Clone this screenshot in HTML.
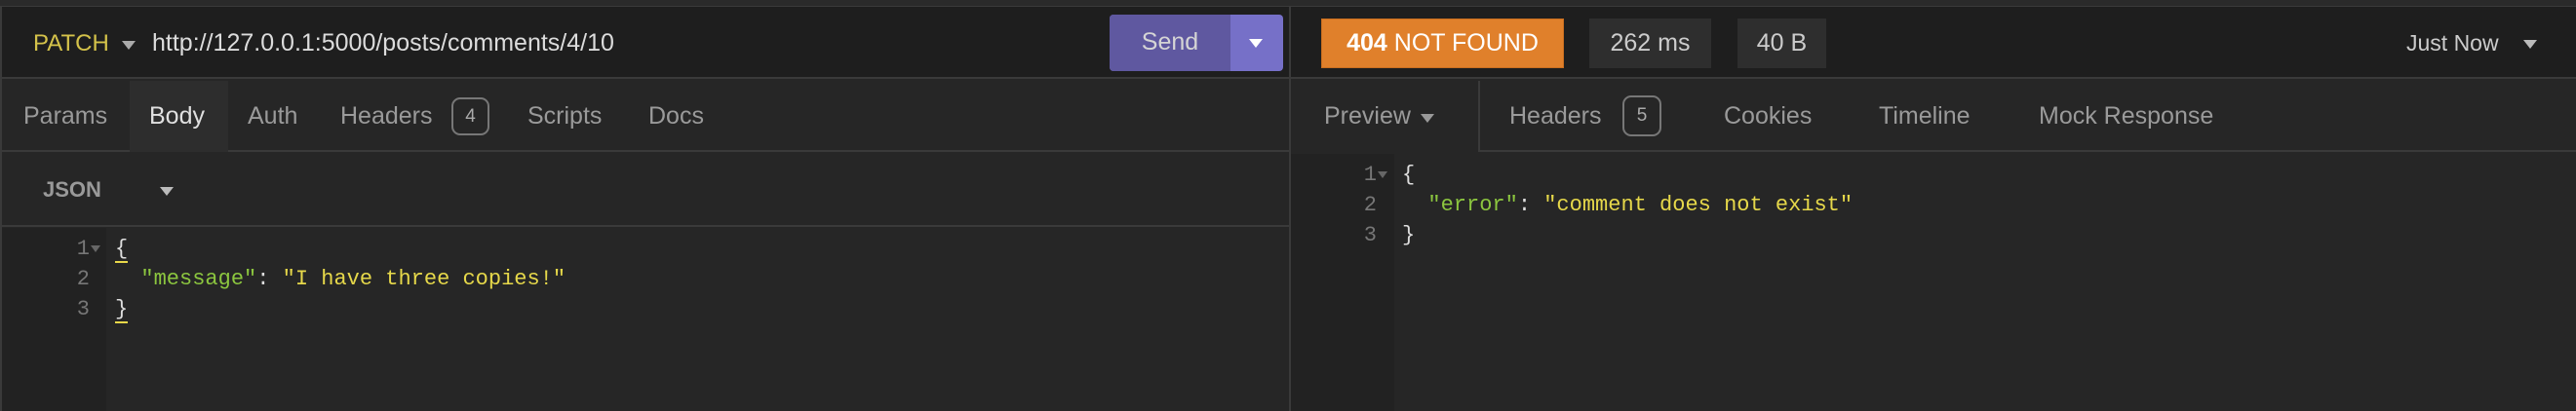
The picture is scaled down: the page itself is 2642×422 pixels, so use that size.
<!DOCTYPE html>
<html><head><style>
*{margin:0;padding:0;box-sizing:border-box}
body{width:2642px;height:422px;background:#262626;position:relative;overflow:hidden;font-family:"Liberation Sans",sans-serif;color:#a8a8a8}
.a{position:absolute;white-space:nowrap}
.mono{font-family:"Liberation Mono",monospace;font-size:22px}
.tab{font-size:25px;color:#9a9a9a;top:105px}
.badge{position:absolute;border:2px solid #777;border-radius:9px;font-size:19px;color:#aaa;text-align:center;line-height:35px}
.tri{width:0;height:0;border-left:7px solid transparent;border-right:7px solid transparent;border-top:9px solid currentColor;position:absolute}
</style></head><body>
<div class="a" style="left:0;top:0;width:2642px;height:7px;background:#2a2a2a;border-bottom:1px solid #3a3a3a"></div>
<div class="a" style="left:0;top:7px;width:2642px;height:74px;background:#1e1e1e;border-bottom:2px solid #3a3a3a"></div>
<div class="a" style="left:0;top:7px;width:2px;height:415px;background:#3a3a3a"></div>
<div class="a" style="left:1322px;top:7px;width:2px;height:415px;background:#3a3a3a"></div>
<div class="a" style="left:34px;top:31px;font-size:24px;color:#d4c24a">PATCH</div>
<div class="tri" style="left:125px;top:42px;color:#aaa"></div>
<div class="a" style="left:156px;top:30px;font-size:25px;color:#dcdcdc">http://127.0.0.1:5000/posts/comments/4/10</div>
<div class="a" style="left:1138px;top:15px;width:178px;height:58px;border-radius:4px;background:#7670c8;overflow:hidden">
<div style="position:absolute;left:0;top:0;width:124px;height:58px;background:#5f58a0"></div>
<div style="position:absolute;left:0;top:14px;width:124px;text-align:center;font-size:25px;color:#d5d5d5">Send</div>
<div class="tri" style="left:143px;top:25px;color:#fff"></div></div>
<div class="a" style="left:2px;top:83px;width:1320px;height:73px;border-bottom:2px solid #3a3a3a"></div>
<div class="a" style="left:133px;top:83px;width:101px;height:73px;background:#2d2d2d"></div>
<div class="a tab" style="left:24px">Params</div>
<div class="a tab" style="left:153px;color:#e0e0e0">Body</div>
<div class="a tab" style="left:254px">Auth</div>
<div class="a tab" style="left:349px">Headers</div>
<div class="badge" style="left:463px;top:100px;width:39px;height:39px">4</div>
<div class="a tab" style="left:541px">Scripts</div>
<div class="a tab" style="left:665px">Docs</div>
<div class="a" style="left:2px;top:158px;width:1320px;height:75px;border-bottom:2px solid #3a3a3a"></div>
<div class="a" style="left:44px;top:182px;font-size:22px;font-weight:bold;color:#999">JSON</div>
<div class="tri" style="left:164px;top:192px;color:#bbb"></div>
<div class="a" style="left:2px;top:234px;width:107px;height:188px;background:#222"></div>
<div class="a mono" style="left:72px;top:240px;line-height:31px;color:#777;text-align:right;width:20px">1<br>2<br>3</div>
<div class="tri" style="left:93px;top:252px;border-left-width:5px;border-right-width:5px;border-top-width:7px;color:#666"></div>
<div class="a mono" style="left:118px;top:240px;line-height:31px;color:#ddd">
<span style="border-bottom:2px solid #e8d84a">{</span><br>&nbsp;&nbsp;<span style="color:#8cc63f">"message"</span>: <span style="color:#e6d84a">"I have three copies!"</span><br><span style="border-bottom:2px solid #e8d84a">}</span></div>
<div class="a" style="left:1355px;top:19px;width:249px;height:51px;background:#e0802b;border:1px solid #c96e1f;color:#fff;font-size:25px;line-height:49px;text-align:center"><b>404</b> NOT FOUND</div>
<div class="a" style="left:1630px;top:19px;width:125px;height:51px;background:#2e2e2e;color:#ccc;font-size:25px;line-height:51px;text-align:center">262 ms</div>
<div class="a" style="left:1782px;top:19px;width:91px;height:51px;background:#2e2e2e;color:#ccc;font-size:25px;line-height:51px;text-align:center">40 B</div>
<div class="a" style="left:2468px;top:31px;font-size:23px;color:#ccc">Just Now</div>
<div class="tri" style="left:2588px;top:41px;color:#bbb"></div>
<div class="a" style="left:1516px;top:83px;width:1126px;height:73px;border-left:2px solid #3a3a3a;border-bottom:2px solid #3a3a3a"></div>
<div class="a tab" style="left:1358px">Preview</div>
<div class="tri" style="left:1457px;top:117px;color:#999"></div>
<div class="a tab" style="left:1548px">Headers</div>
<div class="badge" style="left:1664px;top:98px;width:40px;height:42px;line-height:38px">5</div>
<div class="a tab" style="left:1768px">Cookies</div>
<div class="a tab" style="left:1927px">Timeline</div>
<div class="a tab" style="left:2091px">Mock Response</div>
<div class="a" style="left:1324px;top:158px;width:106px;height:264px;background:#222"></div>
<div class="a mono" style="left:1392px;top:164px;line-height:31px;color:#777;text-align:right;width:20px">1<br>2<br>3</div>
<div class="tri" style="left:1413px;top:176px;border-left-width:5px;border-right-width:5px;border-top-width:7px;color:#666"></div>
<div class="a mono" style="left:1438px;top:164px;line-height:31px;color:#ddd">{<br>&nbsp;&nbsp;<span style="color:#8cc63f">"error"</span>: <span style="color:#e6d84a">"comment does not exist"</span><br>}</div>
</body></html>
